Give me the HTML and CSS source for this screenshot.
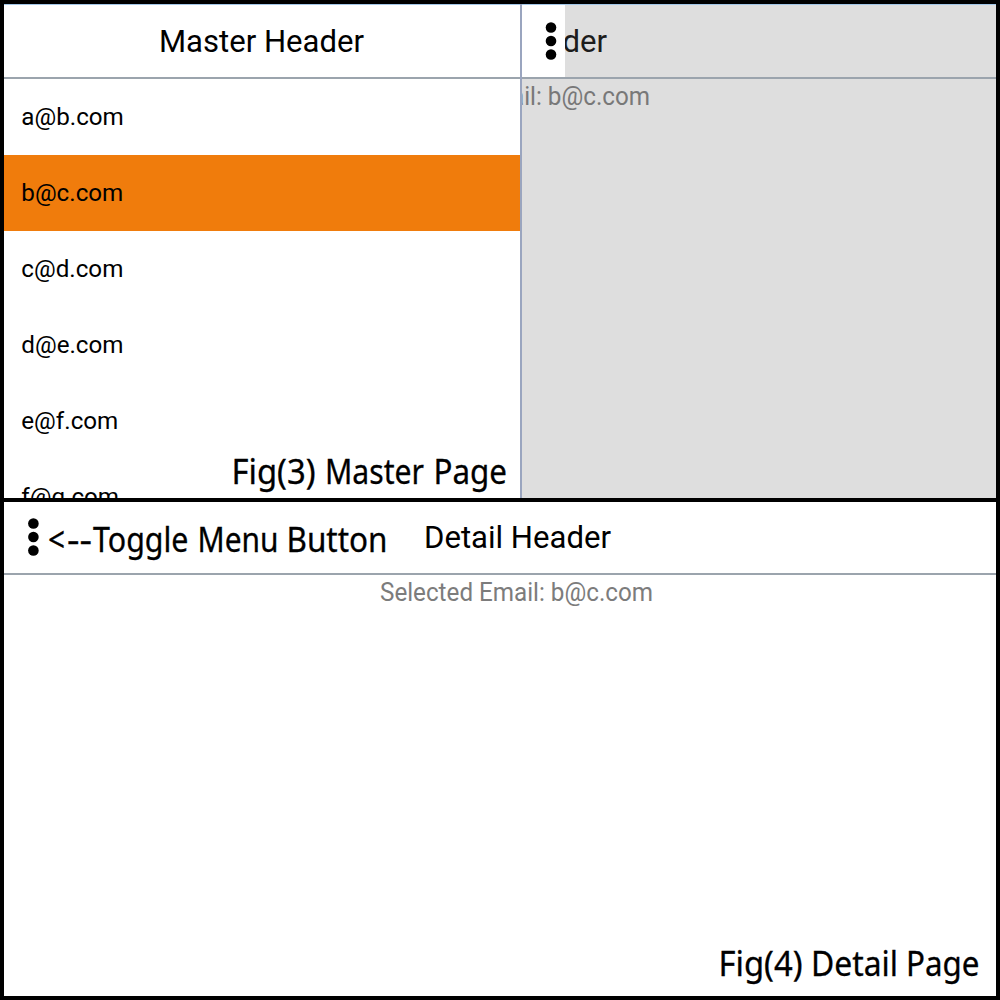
FILE: index.html
```html
<!DOCTYPE html>
<html lang="en">
<head>
<meta charset="utf-8">
<title>Master Detail Pages</title>
<link rel="stylesheet" href="styles.css">
</head>
<body>
<main class="figures">
  <section class="screen split">
    <div class="master">
      <header class="bar"><svg class="title" width="205" height="44"><text x="0" y="32" textLength="205" lengthAdjust="spacingAndGlyphs">Master Header</text></svg></header>
      <ul class="list">
        <li class="item">a@b.com</li>
        <li class="item selected">b@c.com</li>
        <li class="item">c@d.com</li>
        <li class="item">d@e.com</li>
        <li class="item">e@f.com</li>
        <li class="item">f@g.com</li>
      </ul>
      <svg class="caption caption-master" width="278" height="50"><text y="36"><tspan x="0.5" textLength="84" lengthAdjust="spacingAndGlyphs">Fig(3)</tspan> <tspan x="94" textLength="99" lengthAdjust="spacingAndGlyphs">Master</tspan> <tspan x="202.5" textLength="73.5" lengthAdjust="spacingAndGlyphs">Page</tspan></text></svg>
    </div>
    <div class="detail dimmed">
      <header class="bar">
        <span class="toggle"><svg class="dots" width="14" height="40" viewBox="0 0 14 40"><circle cx="7" cy="6.5" r="5.3"/><circle cx="7" cy="20" r="5.3"/><circle cx="7" cy="33.5" r="5.3"/></svg></span>
        <span class="clip"><svg class="title" width="188" height="44"><text x="0" y="32" textLength="187" lengthAdjust="spacingAndGlyphs">Detail Header</text></svg></span>
      </header>
      <div class="clip email-clip"><svg class="email" width="274" height="34"><text x="0" y="26" textLength="273" lengthAdjust="spacingAndGlyphs">Selected Email: b@c.com</text></svg></div>
    </div>
  </section>
  <section class="screen full">
    <header class="bar">
      <svg class="dots" width="14" height="40" viewBox="0 0 14 40"><circle cx="7.4" cy="6.5" r="5.3"/><circle cx="7.4" cy="20" r="5.3"/><circle cx="7.4" cy="33.5" r="5.3"/></svg>
      <svg class="caption note" width="341" height="50"><text y="36"><tspan x="0" textLength="17" lengthAdjust="spacingAndGlyphs">&lt;</tspan><tspan x="19" textLength="25" lengthAdjust="spacingAndGlyphs">--</tspan><tspan x="45" textLength="95.5" lengthAdjust="spacingAndGlyphs">Toggle</tspan> <tspan x="149.5" textLength="81" lengthAdjust="spacingAndGlyphs">Menu</tspan> <tspan x="238.5" textLength="101" lengthAdjust="spacingAndGlyphs">Button</tspan></text></svg>
      <svg class="title" width="187" height="44"><text x="0" y="32" textLength="187" lengthAdjust="spacingAndGlyphs">Detail Header</text></svg>
    </header>
    <svg class="email" width="274" height="34"><text x="0" y="26" textLength="273" lengthAdjust="spacingAndGlyphs">Selected Email: b@c.com</text></svg>
    <svg class="caption caption-detail" width="262" height="50"><text y="36"><tspan x="0.5" textLength="84" lengthAdjust="spacingAndGlyphs">Fig(4)</tspan> <tspan x="93" textLength="87" lengthAdjust="spacingAndGlyphs">Detail</tspan> <tspan x="188" textLength="73.5" lengthAdjust="spacingAndGlyphs">Page</tspan></text></svg>
  </section>
</main>
</body>
</html>
```
FILE: styles.css
```css
* { box-sizing: border-box; }
body { margin: 0; font-family: Roboto, "Liberation Sans", sans-serif; color: #000; }
svg { display: block; flex: none; overflow: visible; }
.figures {
  display: grid;
  grid-template-rows: 494px 494px;
  gap: 4px;
  width: 1000px;
  height: 1000px;
  padding: 4px;
  background: #000;
}
.screen { background: #fff; overflow: hidden; }
.split { display: grid; grid-template-columns: 518px 1fr; }
.master, .detail { min-width: 0; height: 494px; overflow: hidden; }
.master { position: relative; border-right: 2px solid #9aa5bf; }
.bar { display: flex; height: 75px; border-bottom: 2px solid #9ba4ad; }
.split .bar { border-top: 1px solid #a3c7e8; }
.master .bar { padding: 15px 0 0 155px; }
.title { font-size: 32px; }
.list { margin: 0; padding: 0; list-style: none; }
.item { height: 76px; padding-left: 17.3px; font-size: 24.2px; line-height: 76px; }
.selected { background: #f07c0c; }
.caption { font-family: "Noto Sans", sans-serif; font-size: 34px; stroke: #000; stroke-width: 0.3px; }
.caption-master { position: absolute; left: 227px; top: 444px; }
.dimmed { background: #dedede; }
.toggle { width: 43px; padding: 16px 0 0 22px; background: #fff; }
.clip { display: flex; justify-content: flex-end; overflow: hidden; }
.detail .bar .clip { width: 43px; padding-top: 15px; }
.detail .title { fill: #1c1c1c; }
.email { font-size: 25px; fill: #7c7c7c; }
.dimmed .email { fill: #787878; }
.email-clip { width: 129px; height: 40px; }
.full { display: flex; flex-direction: column; position: relative; }
.full .bar { height: 73px; flex: none; }
.full .dots { margin: 15px 0 0 22px; }
.note { margin: 14px 0 0 8px; }
.full .title { margin: 14px 0 0 35px; }
.full .email { margin-left: 375.5px; }
.caption-detail { position: absolute; left: 714px; top: 438px; }
```
